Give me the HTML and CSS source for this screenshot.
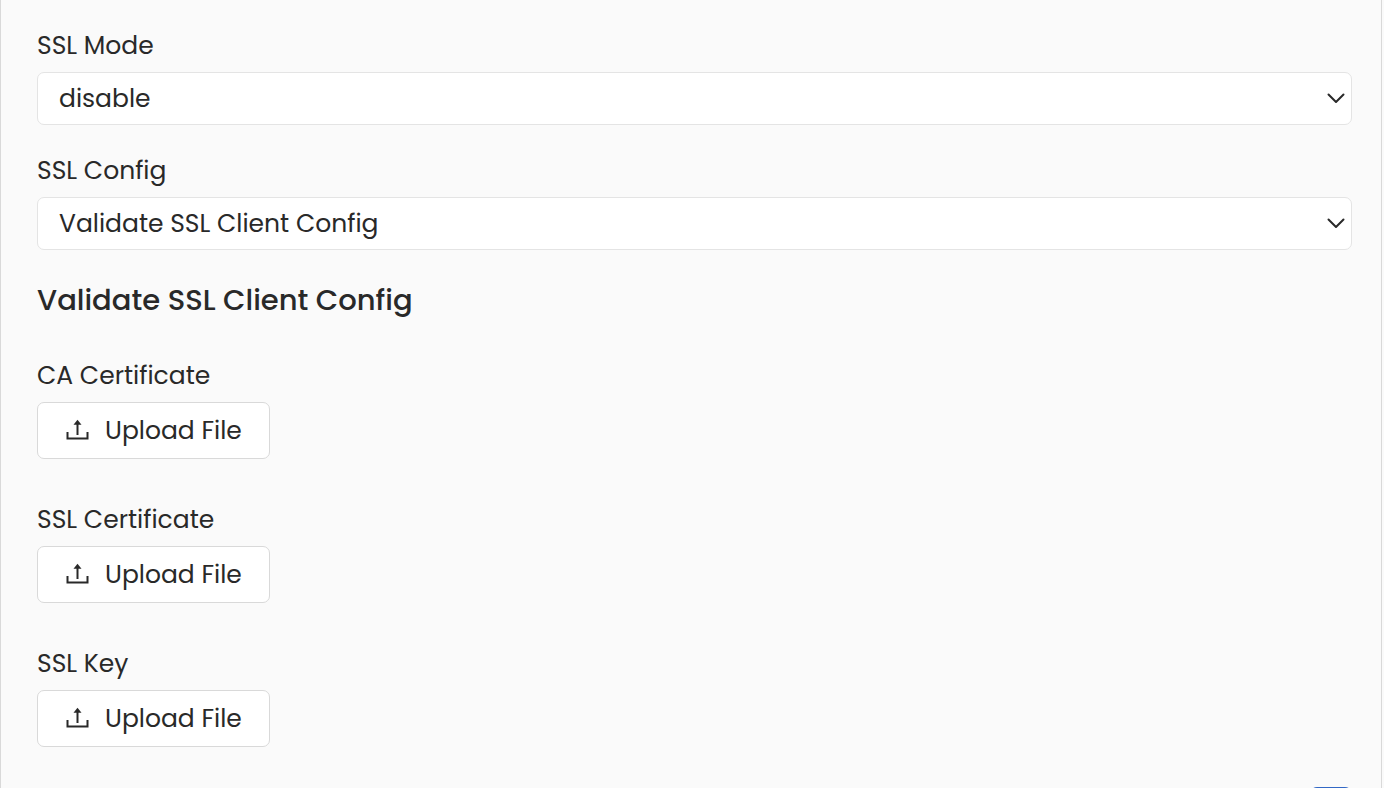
FILE: index.html
```html
<!DOCTYPE html>
<html lang="en">
<head>
<meta charset="utf-8">
<meta name="viewport" content="width=device-width, initial-scale=1">
<title>SSL Configuration</title>
<link rel="stylesheet" href="styles.css">
</head>
<body>
<svg class="sprite" aria-hidden="true">
  <symbol id="upload" viewBox="0 0 24 24">
    <path d="M1.500 13v6.500h20V13" fill="none" stroke="currentColor" stroke-width="2"/>
    <path d="M11.500 16V4" fill="none" stroke="currentColor" stroke-width="2"/>
    <path d="M11.500 0.800l4 5h-8z" fill="currentColor"/>
  </symbol>
  <symbol id="chevron" viewBox="0 0 20 12">
    <path d="M2.500 2.500l7.500 7.500 7.500-7.500" fill="none" stroke="currentColor" stroke-width="2" stroke-linecap="round" stroke-linejoin="round"/>
  </symbol>
</svg>
<form class="panel">
  <div class="field">
    <label class="label" for="ssl-mode">SSL Mode</label>
    <div class="select-wrap">
      <select class="select" id="ssl-mode"><option>disable</option></select>
      <svg class="chevron" aria-hidden="true"><use href="#chevron"/></svg>
    </div>
  </div>
  <div class="field">
    <label class="label" for="ssl-config">SSL Config</label>
    <div class="select-wrap">
      <select class="select" id="ssl-config"><option>Validate SSL Client Config</option></select>
      <svg class="chevron" aria-hidden="true"><use href="#chevron"/></svg>
    </div>
  </div>
  <h2 class="heading">Validate SSL Client Config</h2>
  <div class="uploads">
    <div class="upload-field">
      <label class="label" for="ca-cert">CA Certificate</label>
      <button class="upload" id="ca-cert" type="button"><svg class="upload-icon" aria-hidden="true"><use href="#upload"/></svg>Upload File</button>
    </div>
    <div class="upload-field">
      <label class="label" for="ssl-cert">SSL Certificate</label>
      <button class="upload" id="ssl-cert" type="button"><svg class="upload-icon" aria-hidden="true"><use href="#upload"/></svg>Upload File</button>
    </div>
    <div class="upload-field">
      <label class="label" for="ssl-key">SSL Key</label>
      <button class="upload" id="ssl-key" type="button"><svg class="upload-icon" aria-hidden="true"><use href="#upload"/></svg>Upload File</button>
    </div>
  </div>
  <div class="footer">
    <button class="toggle" type="button" aria-pressed="true"></button>
  </div>
</form>
</body>
</html>
```
FILE: styles.css
```css
* { box-sizing: border-box; }
html { height: 100%; overflow: hidden; }
body {
  margin: 0;
  height: 100%;
  overflow: hidden;
  background: #fafafa;
  color: #292929;
  font-family: Poppins, Inter, "Open Sans", sans-serif;
  font-size: 25px;
}
.sprite { display: none; }
.panel {
  margin-right: 2px;
  padding: 28px 29px 28px 36px;
  border: 1px solid #d9d9d9;
  border-width: 0 1px;
  background: #fafafa;
}
.field { margin-bottom: 28px; }
.label { display: block; margin-bottom: 8px; line-height: 36px; }
.select-wrap { position: relative; }
.select {
  display: block;
  width: 100%;
  height: 53px;
  padding: 0 48px 0 21px;
  border: 1px solid #e4e4e4;
  border-radius: 7px;
  appearance: none;
  background: #fff;
  color: inherit;
  font: inherit;
}
.chevron {
  position: absolute;
  top: 20px;
  right: 6px;
  width: 20px;
  height: 12px;
  pointer-events: none;
}
.heading { margin: 30px 0 38px; font-size: 29px; font-weight: 500; line-height: 40px; }
.uploads { display: grid; gap: 43px; }
.upload {
  display: flex;
  align-items: center;
  gap: 15px;
  height: 57px;
  padding: 0 27px 0 28px;
  border: 1px solid #d9d9d9;
  border-radius: 7px;
  background: #fff;
  color: inherit;
  font: inherit;
}
.upload-icon { width: 24px; height: 24px; }
.footer { display: flex; justify-content: flex-end; margin-top: 40px; }
.toggle { width: 42px; height: 42px; border: 0; border-radius: 7px; background: #3268c5; }
```
